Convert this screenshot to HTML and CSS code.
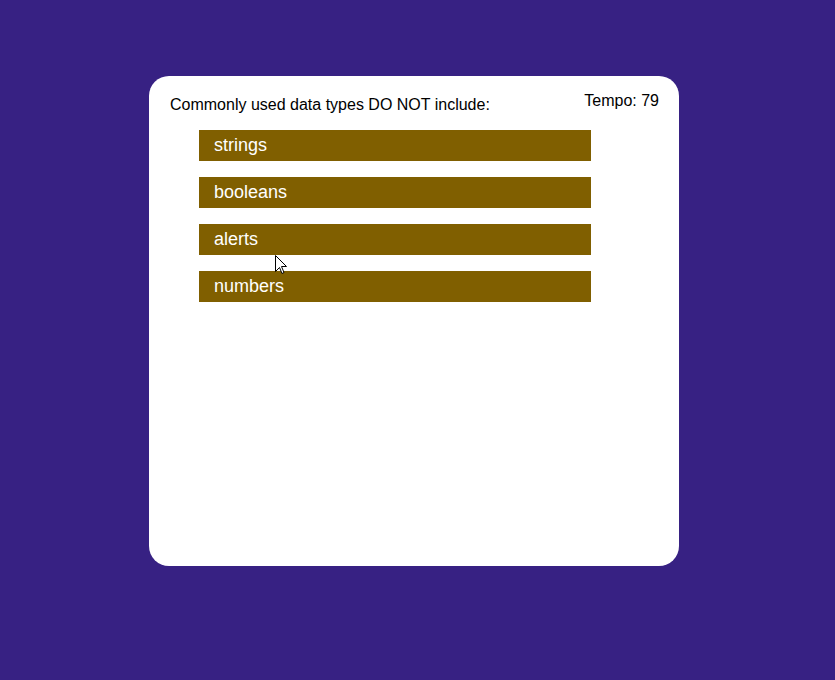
FILE: index.html
```html
<!DOCTYPE html>
<html>
<head>
<meta charset="utf-8">
<link rel="stylesheet" href="styles.css">
</head>
<body>
<div class="card">
  <div class="header">
    <p class="question">Commonly used data types DO NOT include:</p>
    <p class="tempo">Tempo: 79</p>
  </div>
  <div class="answers">
    <button class="answer">strings</button>
    <button class="answer">booleans</button>
    <button class="answer">alerts</button>
    <button class="answer">numbers</button>
  </div>
</div>
<svg class="cursor" width="13" height="20" viewBox="0 0 13 20">
  <path d="M0.5 0.5 L0.5 16.5 L4.5 12.5 L7 18.5 L9 17.5 L6.5 11.5 L11.5 11.5 Z" fill="#fff" stroke="#000" stroke-width="1" stroke-linejoin="miter"/>
</svg>
</body>
</html>
```
FILE: styles.css
```css
html, body {
  margin: 0;
  padding: 0;
}
body {
  background: #372183;
  font-family: "Liberation Sans", Arial, sans-serif;
  height: 680px;
  position: relative;
}
.card {
  box-sizing: border-box;
  width: 530px;
  height: 490px;
  margin: 76px 0 0 149px;
  background: #ffffff;
  border-radius: 20px;
  padding: 16px 20px 0 21px;
}
.header {
  display: flex;
  justify-content: space-between;
  align-items: flex-start;
}
.question {
  margin: 0;
  padding-top: 4px;
  font-size: 16px;
  line-height: 18px;
  color: #000;
}
.tempo {
  margin: 0;
  font-size: 16px;
  line-height: 18px;
  color: #000;
}
.answers {
  display: flex;
  flex-direction: column;
  gap: 16px;
  margin: 16px 0 0 29px;
}
.answer {
  width: 392px;
  height: 31px;
  border: none;
  background: #805f00;
  color: #fff;
  font-family: "Liberation Sans", Arial, sans-serif;
  font-size: 18px;
  text-align: left;
  padding: 0 0 0 15px;
  margin: 0;
}
.cursor {
  position: absolute;
  left: 275px;
  top: 255px;
}
```
